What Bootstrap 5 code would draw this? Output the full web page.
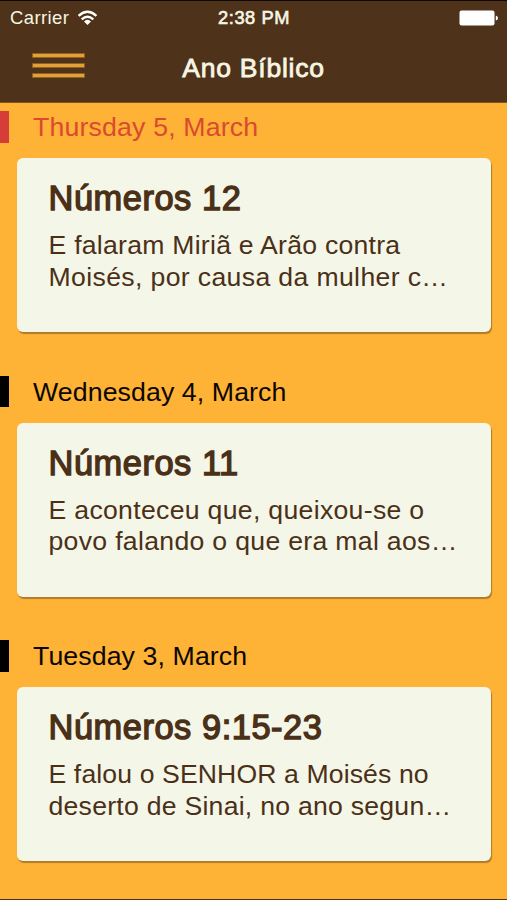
<!DOCTYPE html>
<html lang="pt">
<head>
<meta charset="utf-8">
<meta name="viewport" content="width=device-width, initial-scale=1">
<title>Ano Bíblico</title>
<link href="https://cdn.jsdelivr.net/npm/bootstrap@5.3.0/dist/css/bootstrap.min.css" rel="stylesheet">
<style>
  body { font-family: "Liberation Sans", Arial, sans-serif; background: #feb236; color: #4b3018; }
  .screen { height: 900px; border-bottom: 1px solid #4e331a; }
  .top-area { height: 103px; background: #4e331a; border-top: 1px solid #0c0703; color: #f6f6e4; border-bottom: 1px solid #7e5420; }
  .status { height: 34px; padding: 0 9px 0 10px; font-size: 18.5px; line-height: 34px; }
  .status > * { flex: 1 1 0; }
  .carrier { letter-spacing: .4px; }
  .clock { font-size: 18.3px; letter-spacing: .55px; -webkit-text-stroke: .6px; }
  .title-bar { height: 67px; display: grid; grid-template-columns: 1fr auto 1fr; align-items: center; }
  .page-title { font-size: 26.5px; line-height: 67px; letter-spacing: .75px; -webkit-text-stroke: .8px; }
  .menu-btn { padding: 0 0 5px 32px; border: 0; background: none; text-align: left; line-height: 0; }
  .day { height: 264.5px; padding-top: 8px; }
  .day-head { height: 31.5px; border-left: 9px solid #000; padding-left: 24px; color: #0b0702; font-size: 26.7px; line-height: 33px; letter-spacing: .1px; }
  .today .day-head { border-color: #d63d38; color: #da4a31; letter-spacing: .17px; }
  .reading { margin: 15.5px 16px 0 17px; height: 174px; padding: 21px 0 0 31.5px; border: 0; border-radius: 6px; background: #f4f6e8; color: #4b3018; box-shadow: 1px 2px 1px #b27a24; }
  .reading h2 { margin: 0; font-size: 34.4px; line-height: 38px; letter-spacing: .55px; font-weight: 400; -webkit-text-stroke: 1.4px; }
  .reading p { margin: 13px 0 0; font-size: 26.6px; line-height: 31.8px; letter-spacing: .32px; }
  .fit-loose { letter-spacing: .37px; }
  .fit-mid { letter-spacing: .26px; }
  .fit-tight { letter-spacing: .12px; }
</style>
<script src="https://cdn.jsdelivr.net/npm/bootstrap@5.3.0/dist/js/bootstrap.bundle.min.js"></script>
</head>
<body>
<div class="screen overflow-hidden">
  <header class="top-area">
    <div class="status d-flex align-items-center">
      <div class="d-flex align-items-center">
        <span class="carrier">Carrier</span>
        <svg class="ms-2" width="21" height="16" viewBox="0 0 21 16" fill="none" stroke="#fff" stroke-width="2.4"><path d="M1.6 5.8Q10.5-2.4 19.4 5.8"/><path d="M4.7 9.3Q10.5 4.2 16.3 9.3"/><path d="M7 11.4Q10.5 8.2 14 11.4L10.5 15Z" fill="#fff" stroke="none"/></svg>
      </div>
      <div class="clock text-center">2:38 PM</div>
      <div class="d-flex justify-content-end">
        <svg width="39" height="16" viewBox="0 0 39 16" fill="#fff"><rect x=".5" y=".5" width="35" height="15" rx="2"/><path d="M36.8 5.5Q39 6 39 8T36.8 10.5Z"/></svg>
      </div>
    </div>
    <nav class="title-bar">
      <button class="menu-btn" aria-label="Menu">
        <svg width="53" height="26" viewBox="0 0 53 26" fill="#e4a036" stroke="#8f6224" stroke-width="1"><path d="M.5 .5h52v4H.5zM.5 10.5h52v4H.5zM.5 20.5h52v4H.5z"/></svg>
      </button>
      <div class="page-title">Ano Bíblico</div>
    </nav>
  </header>
  <main>
    <section class="day today">
      <div class="day-head">Thursday 5, March</div>
      <article class="card reading">
        <h2>Números 12</h2>
        <p><span class="fit-mid">E falaram Miriã e Arão contra</span><br><span class="fit-loose">Moisés, por causa da mulher c…</span></p>
      </article>
    </section>
    <section class="day">
      <div class="day-head">Wednesday 4, March</div>
      <article class="card reading">
        <h2>Números 11</h2>
        <p>E aconteceu que, queixou-se o<br>povo falando o que era mal aos…</p>
      </article>
    </section>
    <section class="day">
      <div class="day-head">Tuesday 3, March</div>
      <article class="card reading">
        <h2>Números 9:15-23</h2>
        <p><span class="fit-tight">E falou o SENHOR a Moisés no</span><br><span class="fit-mid">deserto de Sinai, no ano segun…</span></p>
      </article>
    </section>
  </main>
</div>
</body>
</html>
